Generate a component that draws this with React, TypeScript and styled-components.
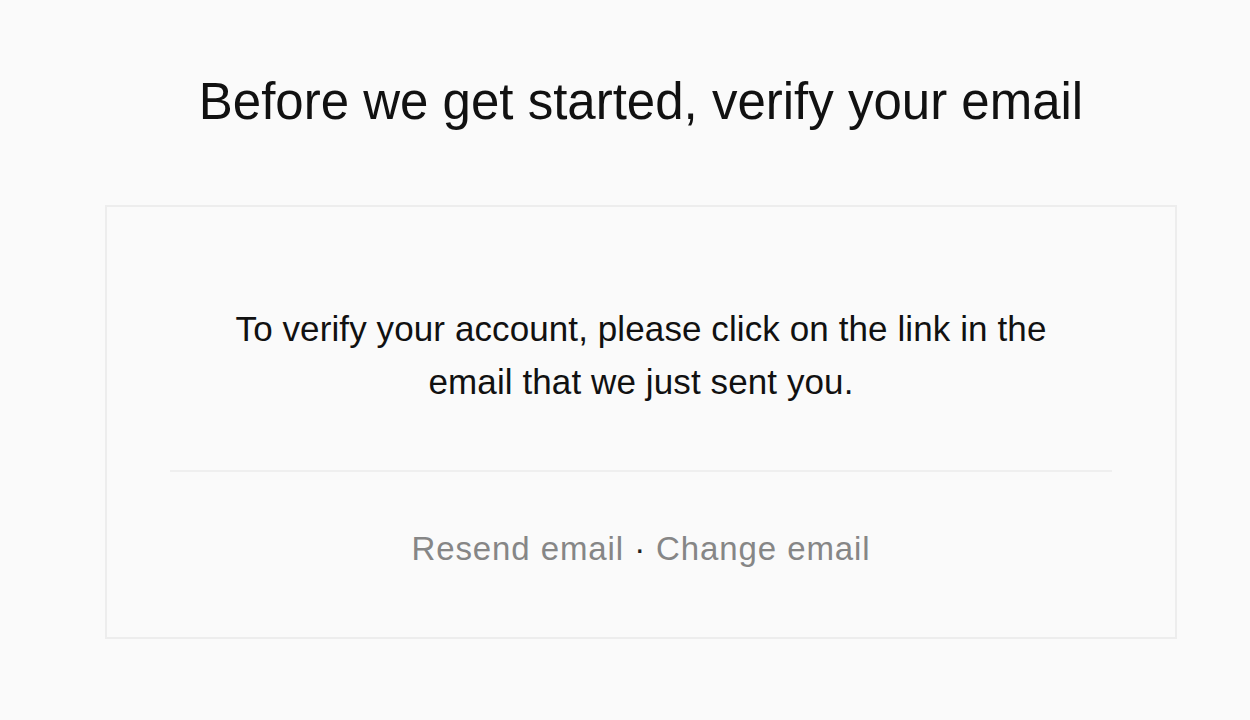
import React from "react";
import styled, { createGlobalStyle } from "styled-components";

const GlobalStyle = createGlobalStyle`
  html, body {
    margin: 0;
    padding: 0;
    background: #fafafa;
  }
  body {
    font-family: "Liberation Sans", Arial, sans-serif;
    color: #111;
  }
`;

const Page = styled.main`
  box-sizing: border-box;
  width: 1250px;
  min-height: 720px;
  padding: 72px 73px 0 105px;
  display: flex;
  flex-direction: column;
  align-items: stretch;
`;

const Title = styled.h1`
  margin: 0 0 73px;
  text-align: center;
  font-size: 51px;
  font-weight: 400;
  line-height: 60px;
  color: #111;
`;

const Card = styled.section`
  box-sizing: border-box;
  height: 434px;
  border: 2px solid #ededed;
  background: #fafafa;
  padding: 0 63px;
  display: flex;
  flex-direction: column;
  align-items: stretch;
`;

const Message = styled.p`
  margin: 95px 0 0;
  text-align: center;
  font-size: 35px;
  line-height: 53px;
  letter-spacing: 0.1px;
  color: #111;
`;

const Divider = styled.hr`
  margin: 62px 0 0;
  border: none;
  height: 2px;
  background: #efefef;
`;

const Actions = styled.div`
  margin-top: 52px;
  text-align: center;
  font-size: 33px;
  line-height: 50px;
  letter-spacing: 0.9px;
  color: #868686;
`;

const ActionLink = styled.a`
  color: inherit;
  text-decoration: none;
  cursor: pointer;
`;

const Dot = styled.span`
  color: #222;
`;

export default function App() {
  return (
    <>
      <GlobalStyle />
      <Page>
        <Title>Before we get started, verify your email</Title>
        <Card>
          <Message>
            To verify your account, please click on the link in the
            <br />
            email that we just sent you.
          </Message>
          <Divider />
          <Actions>
            <ActionLink>Resend email</ActionLink> <Dot>·</Dot>{" "}
            <ActionLink>Change email</ActionLink>
          </Actions>
        </Card>
      </Page>
    </>
  );
}
